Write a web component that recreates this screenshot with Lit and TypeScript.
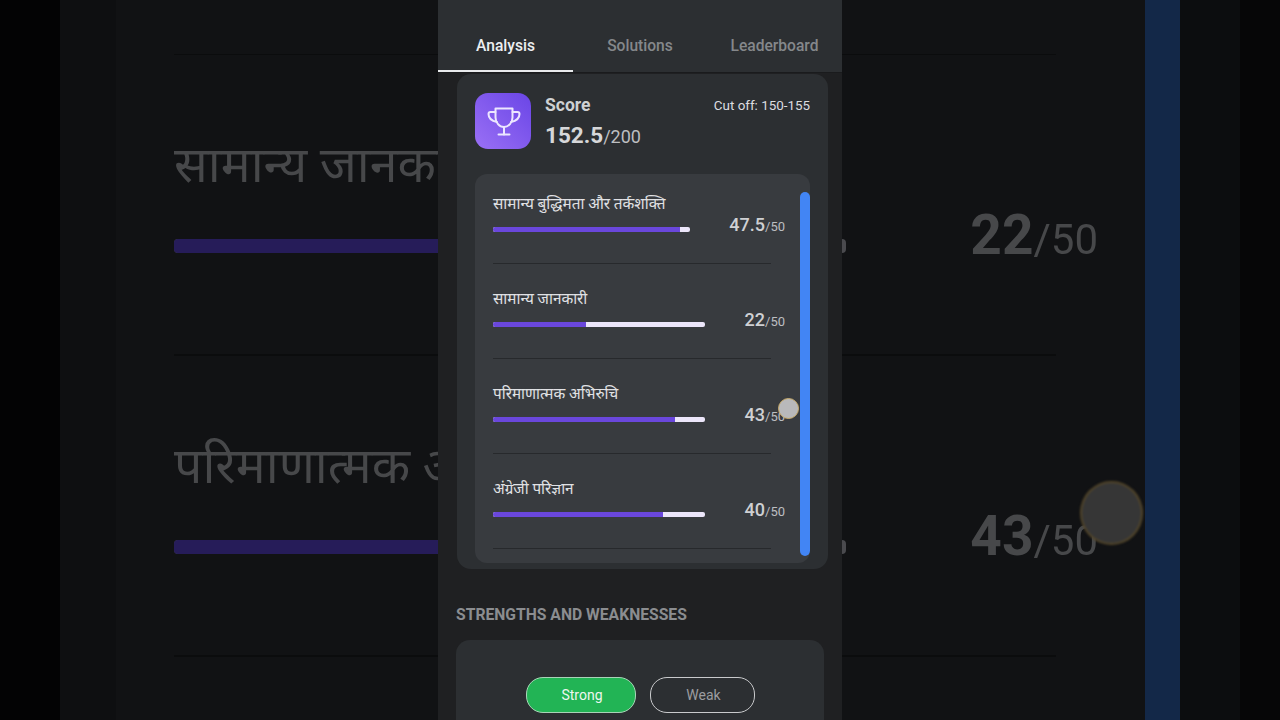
import { LitElement, html, css } from 'lit';
import { customElement } from 'lit/decorators.js';

const SUBJECTS = [
  { name: 'सामान्य बुद्धिमता और तर्कशक्ति', score: '47.5', fill: 95, track: 197 },
  { name: 'सामान्य जानकारी', score: '22', fill: 44, track: 212 },
  { name: 'परिमाणात्मक अभिरुचि', score: '43', fill: 86, track: 212 },
  { name: 'अंग्रेजी परिज्ञान', score: '40', fill: 80, track: 212 },
];

const BACKDROP = [
  { name: 'सामान्य जानकारी', score: '22', fill: 44 },
  { name: 'परिमाणात्मक अभिरुचि', score: '43', fill: 86 },
];

@customElement('app-root')
export class AppRoot extends LitElement {
  static styles = css`
    :host {
      display: block;
      font-family: Roboto, 'Noto Sans', 'Noto Sans Devanagari', sans-serif;
    }

    .stage {
      position: relative;
      width: 1280px;
      height: 720px;
      overflow: hidden;
      display: flex;
      justify-content: center;
      background: linear-gradient(
        90deg,
        #030304 0,
        #030304 60px,
        #0e0f11 60px,
        #0e0f11 116px,
        #111214 116px,
        #111214 1145px,
        #132848 1145px,
        #132848 1180px,
        #0c0d0f 1180px,
        #0c0d0f 1240px,
        #060607 1240px
      );
    }

    /* the blown up video copy behind the phone */
    .backdrop {
      position: absolute;
      inset: 0;
      padding: 54px 182px 0 174px;
      filter: blur(0.7px);
    }

    .back-top {
      height: 1px;
      width: 882px;
      background: #0b0c0d;
    }

    .back-row {
      height: 301px;
      box-sizing: border-box;
      display: flex;
      justify-content: space-between;
      position: relative;
    }

    .back-main {
      width: 882px;
      border-bottom: 2px solid #0b0c0d;
      box-sizing: border-box;
      padding-top: 78px;
    }

    .back-title {
      width: 264px;
      overflow: hidden;
      font-size: 50px;
      line-height: 64px;
      color: #47484a;
      white-space: nowrap;
    }

    .back-bar {
      width: 672px;
      height: 14px;
      margin-top: 42px;
      border-radius: 4px;
      overflow: hidden;
      background: #4a4a4e;
    }

    .back-fill {
      height: 100%;
      background: #261c59;
    }

    .back-value {
      position: absolute;
      right: 0;
      top: 145px;
      font-size: 55px;
      line-height: 70px;
      font-weight: 700;
      color: #47484a;
    }

    .back-value span {
      font-size: 42px;
      font-weight: 400;
    }

    .phone {
      position: relative;
      width: 404px;
      height: 720px;
      flex: none;
      overflow: hidden;
      background: #1f2022;
    }

    .tabs {
      height: 72px;
      display: grid;
      grid-template-columns: 135px 134px 135px;
      background: #2c2f32;
      border-bottom: 1px solid #1a1b1d;
    }

    .tab {
      padding-top: 37px;
      box-sizing: border-box;
      height: 72px;
      text-align: center;
      font-size: 15.6px;
      line-height: 18px;
      font-weight: 500;
      color: #85888b;
    }

    .tab.active {
      color: #eceef0;
      border-bottom: 2px solid #e8eaec;
    }

    .card {
      margin: 1px 14px 0 19px;
      height: 495px;
      box-sizing: border-box;
      padding: 19px 18px 0;
      border-radius: 14px;
      background: #2c2f32;
    }

    .score-head {
      display: flex;
      gap: 14px;
      height: 56px;
    }

    .trophy {
      width: 56px;
      height: 56px;
      flex: none;
      box-sizing: border-box;
      padding-left: 2px;
      border-radius: 13px;
      display: flex;
      align-items: center;
      justify-content: center;
      background: linear-gradient(225deg, #6a45e6, #9a70f5);
    }

    .score-text {
      flex: 1;
      padding-top: 2px;
    }

    .score-label {
      font-size: 17.5px;
      line-height: 20px;
      font-weight: 700;
      color: #cfd1d3;
    }

    .score-num {
      margin-top: 6px;
      font-size: 22.5px;
      line-height: 28px;
      font-weight: 700;
      color: #d6d7d9;
    }

    .score-num span {
      font-size: 18px;
      font-weight: 400;
      color: #bdbfc1;
    }

    .cutoff {
      padding-top: 4px;
      font-size: 13.4px;
      line-height: 17px;
      color: #dcdde0;
    }

    .panel {
      position: relative;
      margin-top: 25px;
      height: 389px;
      width: 335px;
      box-sizing: border-box;
      padding: 18px 0 0 18px;
      border-radius: 12px;
      background: #383b3f;
      overflow: hidden;
    }

    .row {
      width: 278px;
      height: 71px;
      margin-bottom: 23px;
      border-bottom: 1px solid #27292c;
      position: relative;
    }

    .row-name {
      padding-top: 1px;
      font-size: 15.3px;
      line-height: 22px;
      color: #e0e1e4;
      white-space: nowrap;
    }

    .track {
      height: 5px;
      margin-top: 12px;
      border-radius: 2px;
      overflow: hidden;
      background: #ece6fa;
    }

    .fill {
      height: 100%;
      background: #6a47dc;
    }

    .row-value {
      position: absolute;
      right: -14px;
      top: 22px;
      font-size: 18px;
      line-height: 22px;
      font-weight: 500;
      color: #cfd0d3;
    }

    .row-value span {
      font-size: 13px;
      font-weight: 400;
      color: #bcbec1;
    }

    .scrollbar {
      position: absolute;
      right: 0;
      top: 18px;
      width: 10px;
      height: 364px;
      border-radius: 5px;
      background: #4285f4;
    }

    .section-title {
      margin: 37px 0 0 18px;
      font-size: 15.7px;
      line-height: 18px;
      font-weight: 700;
      color: #8b8d90;
    }

    .card-two {
      margin: 16px 18px 0;
      height: 120px;
      padding: 37px 0 0 1px;
      box-sizing: border-box;
      border-radius: 14px;
      background: #2c2f32;
      display: flex;
      justify-content: center;
      align-items: flex-start;
      gap: 14px;
    }

    .pill {
      height: 36px;
      box-sizing: border-box;
      border-radius: 17px;
      display: flex;
      align-items: center;
      justify-content: center;
      font-size: 14px;
    }

    .pill.strong {
      width: 110px;
      padding-left: 2px;
      background: #22b455;
      border: 1.5px solid #a9d4b8;
      color: #eef7f0;
    }

    .pill.weak {
      width: 105px;
      padding-left: 2px;
      border: 1.5px solid #c9cacc;
      color: #9b9da0;
    }

    /* finger touch marker from the recording */
    .touch {
      position: absolute;
      border-radius: 50%;
      box-sizing: border-box;
    }

    .touch.small {
      left: 778px;
      top: 398px;
      width: 21px;
      height: 21px;
      background: #b9b9bb;
      border: 1.5px solid #c9ac6c;
      filter: blur(0.4px);
    }

    .touch.big {
      left: 1080px;
      top: 481px;
      width: 63px;
      height: 64px;
      background: #363636;
      border: 2px solid #53462a;
      filter: blur(1px);
    }
  `;

  render() {
    return html`
      <div class="stage">
        <div class="backdrop">
          <div class="back-top"></div>
          ${BACKDROP.map(
            (item) => html`
              <div class="back-row">
                <div class="back-main">
                  <div class="back-title">${item.name}</div>
                  <div class="back-bar">
                    <div class="back-fill" style="width:${item.fill}%"></div>
                  </div>
                </div>
                <div class="back-value">${item.score}<span>/50</span></div>
              </div>
            `
          )}
        </div>

        <div class="phone">
          <div class="tabs">
            <div class="tab active">Analysis</div>
            <div class="tab">Solutions</div>
            <div class="tab">Leaderboard</div>
          </div>

          <div class="card">
            <div class="score-head">
              <div class="trophy">
                <svg width="34" height="29" viewBox="0 0 34 29" fill="none" stroke="#ece6ff" stroke-width="2" stroke-linecap="round" stroke-linejoin="round">
                  <path d="M8.500 1.500h17v9c0 5-3.800 9.500-8.500 9.500s-8.500-4.500-8.500-9.500z" />
                  <path d="M8.500 5h-5c-1.500 0-2 1-2 2 0 4 3.500 7 8.500 8" />
                  <path d="M25.500 5h5c1.500 0 2 1 2 2 0 4-3.500 7-8.500 8" />
                  <path d="M17 20v7.500" />
                  <path d="M11.500 27.500h11" />
                </svg>
              </div>
              <div class="score-text">
                <div class="score-label">Score</div>
                <div class="score-num">152.5<span>/200</span></div>
              </div>
              <div class="cutoff">Cut off: 150-155</div>
            </div>

            <div class="panel">
              ${SUBJECTS.map(
                (s) => html`
                  <div class="row">
                    <div class="row-name">${s.name}</div>
                    <div class="track" style="width:${s.track}px">
                      <div class="fill" style="width:${s.fill}%"></div>
                    </div>
                    <div class="row-value">${s.score}<span>/50</span></div>
                  </div>
                `
              )}
              <div class="scrollbar"></div>
            </div>
          </div>

          <div class="section-title">STRENGTHS AND WEAKNESSES</div>

          <div class="card-two">
            <div class="pill strong">Strong</div>
            <div class="pill weak">Weak</div>
          </div>
        </div>

        <div class="touch small"></div>
        <div class="touch big"></div>
      </div>
    `;
  }
}
